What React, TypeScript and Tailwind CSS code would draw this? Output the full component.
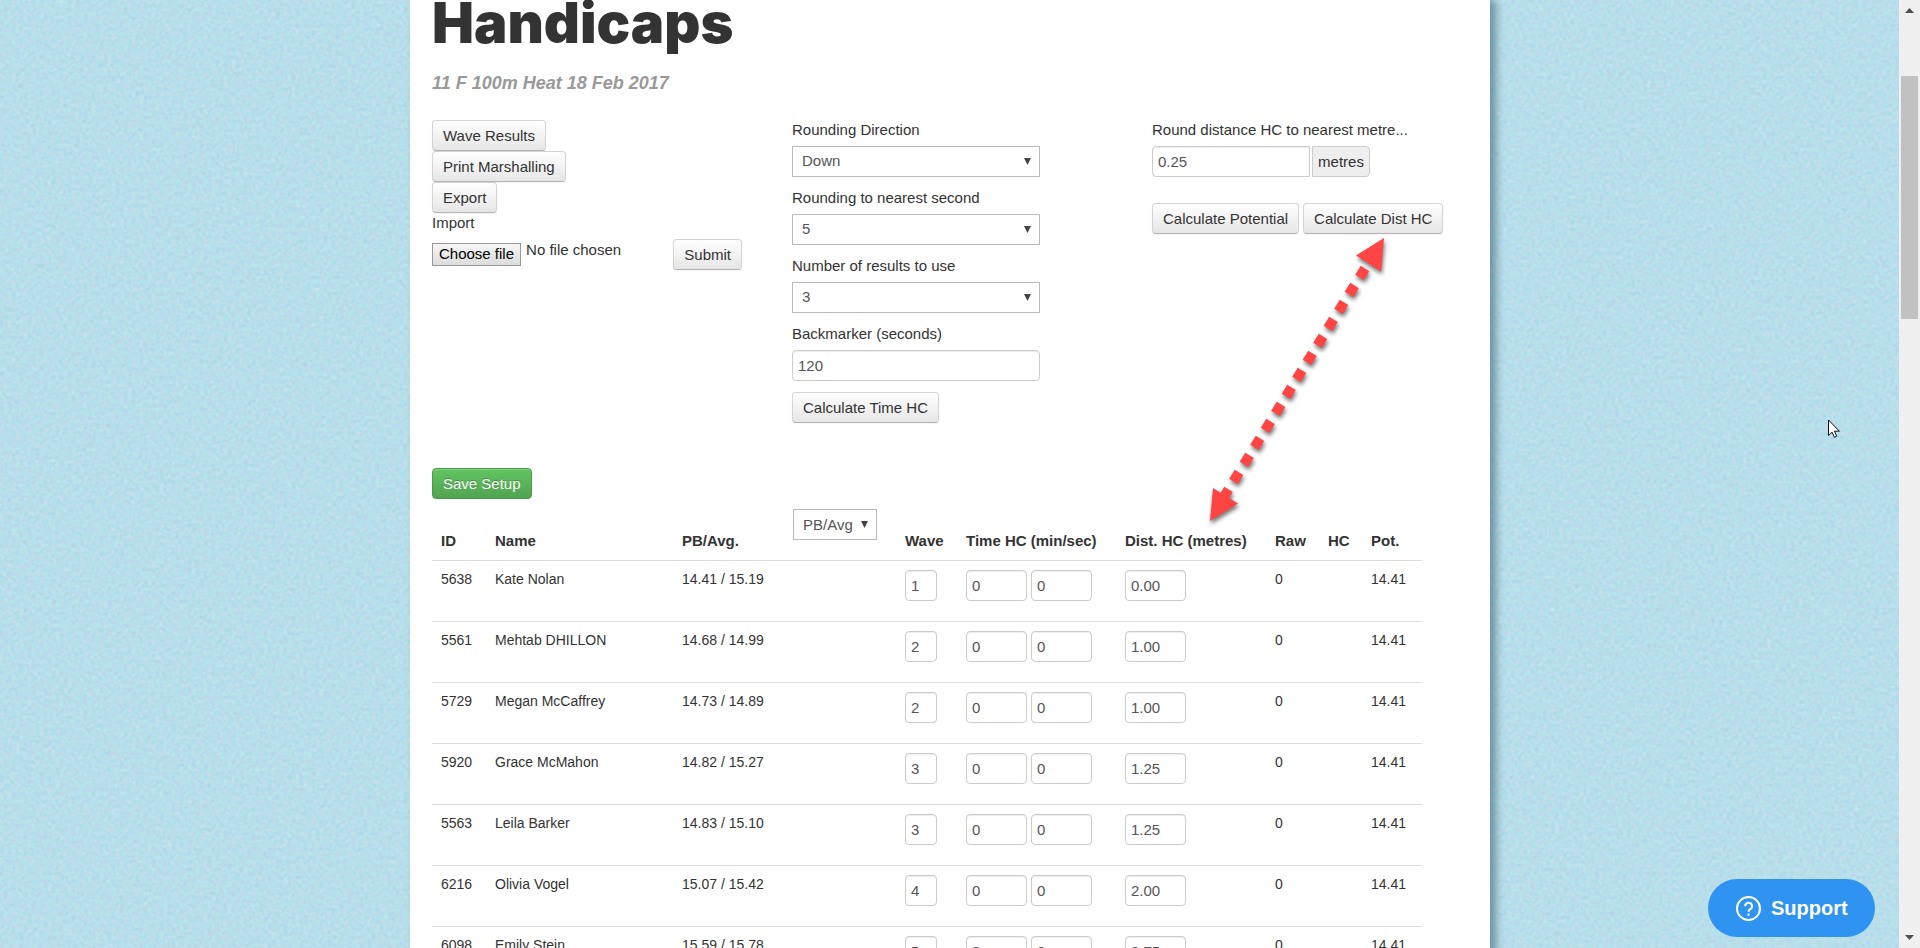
import type { ReactNode } from 'react';

type Runner = {
  id: string;
  name: string;
  times: string;
  wave: string;
  dist: string;
};

const runners: Runner[] = [
  { id: '5638', name: 'Kate Nolan', times: '14.41 / 15.19', wave: '1', dist: '0.00' },
  { id: '5561', name: 'Mehtab DHILLON', times: '14.68 / 14.99', wave: '2', dist: '1.00' },
  { id: '5729', name: 'Megan McCaffrey', times: '14.73 / 14.89', wave: '2', dist: '1.00' },
  { id: '5920', name: 'Grace McMahon', times: '14.82 / 15.27', wave: '3', dist: '1.25' },
  { id: '5563', name: 'Leila Barker', times: '14.83 / 15.10', wave: '3', dist: '1.25' },
  { id: '6216', name: 'Olivia Vogel', times: '15.07 / 15.42', wave: '4', dist: '2.00' },
  { id: '6098', name: 'Emily Stein', times: '15.59 / 15.78', wave: '5', dist: '3.75' },
];

function Button({ children }: { children: ReactNode }) {
  return (
    <button
      type="button"
      className="h-[31px] rounded border border-[#d4d4d4] border-b-[#b3b3b3] bg-linear-to-b from-white to-[#e6e6e6] px-[10px] leading-5 whitespace-nowrap text-[#333] shadow-[0_1px_2px_rgba(0,0,0,0.05)]"
    >
      {children}
    </button>
  );
}

function TextInput({ label, value, width }: { label: string; value: string; width: string }) {
  return (
    <input
      type="text"
      aria-label={label}
      defaultValue={value}
      className={`block h-[31px] rounded border border-[#ccc] bg-white px-[5px] text-[#555] shadow-[inset_0_1px_1px_rgba(0,0,0,0.075)] ${width}`}
    />
  );
}

function Select({ id, label, option, width }: { id: string; label?: string; option: string; width: string }) {
  return (
    <div className={`relative ${width}`}>
      <select
        id={id}
        aria-label={label}
        className="block h-[31px] w-full appearance-none border border-[#bbb] bg-white pl-[9px] text-[#555]"
      >
        <option>{option}</option>
      </select>
      <svg className="pointer-events-none absolute top-3 right-[9px] h-[7px] w-[7px]" viewBox="0 0 7 7">
        <path d="M0 0h7L3.500 7z" fill="#444" />
      </svg>
    </div>
  );
}

function Field({ id, label, children }: { id: string; label: string; children: ReactNode }) {
  return (
    <div className="mb-[11px]">
      <label htmlFor={id} className="mb-[6px] block leading-5">
        {label}
      </label>
      {children}
    </div>
  );
}

function Texture() {
  return (
    <svg className="absolute inset-0 h-full w-full" aria-hidden="true">
      <filter id="paper" x="0" y="0" width="100%" height="100%" colorInterpolationFilters="sRGB">
        <feTurbulence type="fractalNoise" baseFrequency="0.25" numOctaves="3" seed="4" stitchTiles="stitch" />
        <feColorMatrix values="0.16 0 0 0 0.64  0 0.1 0 0 0.82  0 0 0.06 0 0.89  0 0 0 0 1" />
      </filter>
      <rect width="100%" height="100%" filter="url(#paper)" />
    </svg>
  );
}

function Arrow() {
  return (
    <svg
      className="pointer-events-none absolute top-[228px] left-[790px] h-[310px] w-[200px] drop-shadow-[1px_3px_2px_rgba(0,0,0,0.55)]"
      viewBox="1200 228 200 310"
      aria-hidden="true"
    >
      <path d="M1365 268.500L1222 500" fill="none" stroke="#ff4444" strokeWidth="10" strokeDasharray="10.500 9.480" />
      <path d="M1384 238L1381 271.500L1356 255.500z" fill="#ff4444" />
      <path d="M1210 521L1213 488L1238 503.500z" fill="#ff4444" />
    </svg>
  );
}

function Scrollbar() {
  return (
    <div className="flex w-[21px] shrink-0 flex-col items-center bg-[#f0f0f0] py-2" aria-hidden="true">
      <svg className="h-[5px] w-[9px]" viewBox="0 0 9 5">
        <path d="M0 5L4.500 0L9 5z" fill="#505050" />
      </svg>
      <div className="mt-[63px] h-[243px] w-[17px] bg-[#c1c1c1]" />
      <svg className="mt-auto h-[5px] w-[9px]" viewBox="0 0 9 5">
        <path d="M0 0h9L4.500 5z" fill="#505050" />
      </svg>
    </div>
  );
}

export default function App() {
  return (
    <div className="flex h-screen overflow-hidden font-['Liberation_Sans',Arial,sans-serif] text-[15px] text-[#333]">
      <div className="relative flex-1 overflow-hidden bg-[#badeea] pl-px">
        <Texture />

        <main className="relative mx-auto min-h-full max-w-[1080px] bg-white px-[22px] shadow-[6px_0_8px_rgba(50,85,100,0.55)]">
          <h1 className="h-[54px] font-['Inter',sans-serif] text-[56px] leading-[46px] font-black">Handicaps</h1>
          <h3 className="pt-[19px] text-[18px] leading-5 font-bold text-[#999] italic">11 F 100m Heat 18 Feb 2017</h3>

          <div className="mt-[27px] flex h-[348px]">
            <div className="w-[360px] shrink-0">
              <div className="flex flex-col items-start">
                <Button>Wave Results</Button>
                <Button>Print Marshalling</Button>
                <Button>Export</Button>
              </div>
              <p className="leading-5">Import</p>
              <div className="mt-[6px] flex w-[310px] items-start justify-between">
                <div className="flex">
                  <input id="import-file" type="file" className="peer sr-only" />
                  <label
                    htmlFor="import-file"
                    className="mt-1 block h-[23px] border border-[#999] bg-linear-to-b from-[#f6f6f6] to-[#dcdcdc] px-[6px] leading-5 text-black"
                  >
                    Choose file
                  </label>
                  <span className="ml-[5px] leading-[22px]">No file chosen</span>
                </div>
                <Button>Submit</Button>
              </div>
            </div>

            <div className="w-[360px] shrink-0">
              <Field id="direction" label="Rounding Direction">
                <Select id="direction" option="Down" width="w-[248px]" />
              </Field>
              <Field id="nearest" label="Rounding to nearest second">
                <Select id="nearest" option="5" width="w-[248px]" />
              </Field>
              <Field id="results" label="Number of results to use">
                <Select id="results" option="3" width="w-[248px]" />
              </Field>
              <Field id="backmarker" label="Backmarker (seconds)">
                <input
                  id="backmarker"
                  type="text"
                  defaultValue="120"
                  className="block h-[31px] w-[248px] rounded border border-[#ccc] px-[5px] text-[#555] shadow-[inset_0_1px_1px_rgba(0,0,0,0.075)]"
                />
              </Field>
              <Button>Calculate Time HC</Button>
            </div>

            <div>
              <Field id="metres" label="Round distance HC to nearest metre...">
                <div className="flex gap-[2px]">
                  <input
                    id="metres"
                    type="text"
                    defaultValue="0.25"
                    className="h-[31px] w-[158px] rounded-l border border-[#ccc] px-[5px] text-[#555] shadow-[inset_0_1px_1px_rgba(0,0,0,0.075)]"
                  />
                  <span className="h-[31px] w-[58px] rounded-r border border-[#ccc] bg-[#eee] text-center leading-[29px]">
                    metres
                  </span>
                </div>
              </Field>
              <div className="mt-[26px] flex gap-1">
                <Button>Calculate Potential</Button>
                <Button>Calculate Dist HC</Button>
              </div>
            </div>
          </div>

          <button
            type="button"
            className="h-[31px] rounded border border-[#4a9a4a] bg-linear-to-b from-[#62c462] to-[#51a351] px-[10px] leading-5 text-white shadow-[inset_0_1px_0_rgba(255,255,255,0.2)] text-shadow-[0_-1px_0_rgba(0,0,0,0.25)]"
          >
            Save Setup
          </button>

          <table className="mt-[10px] w-[990px] table-fixed border-collapse text-left">
            <thead>
              <tr className="h-[51px] align-bottom leading-5 whitespace-nowrap *:px-[9px] *:pb-[9px]">
                <th className="w-[54px]">ID</th>
                <th className="w-[187px]">Name</th>
                <th className="w-[111px]">PB/Avg.</th>
                <th className="w-[112px] align-top font-normal">
                  <Select id="sort" label="Sort by" option="PB/Avg" width="w-[84px]" />
                </th>
                <th className="w-[61px]">Wave</th>
                <th className="w-[159px]">Time HC (min/sec)</th>
                <th className="w-[150px]">Dist. HC (metres)</th>
                <th className="w-[53px]">Raw</th>
                <th className="w-[43px]">HC</th>
                <th className="w-[60px]">Pot.</th>
              </tr>
            </thead>
            <tbody>
              {runners.map((r) => (
                <tr
                  key={r.id}
                  className="h-[61px] border-t border-[#ddd] align-top text-[14px] leading-5 whitespace-nowrap *:px-[9px]"
                >
                  <td className="pt-2">{r.id}</td>
                  <td className="pt-2">{r.name}</td>
                  <td className="pt-2">{r.times}</td>
                  <td></td>
                  <td className="pt-[9px] text-[15px]">
                    <TextInput label="Wave" value={r.wave} width="w-8" />
                  </td>
                  <td className="pt-[9px] text-[15px]">
                    <div className="flex gap-1">
                      <TextInput label="Minutes" value="0" width="w-[61px]" />
                      <TextInput label="Seconds" value="0" width="w-[61px]" />
                    </div>
                  </td>
                  <td className="pt-[9px] text-[15px]">
                    <TextInput label="Distance handicap" value={r.dist} width="w-[61px]" />
                  </td>
                  <td className="pt-2">0</td>
                  <td></td>
                  <td className="pt-2">14.41</td>
                </tr>
              ))}
            </tbody>
          </table>

          <Arrow />
        </main>

        <button
          type="button"
          className="absolute right-6 bottom-[11px] flex h-[58px] w-[167px] items-center gap-[10px] rounded-full bg-[#2e93f1] pl-7 text-xl font-bold text-white"
        >
          <svg className="h-[25px] w-[25px]" viewBox="0 0 25 25" fill="none" stroke="#fff" strokeWidth="2">
            <circle cx="12.500" cy="12.500" r="11.500" />
            <path d="M9.200 10.200a3.400 3.400 0 1 1 5 3c-1.200.7-1.700 1.200-1.700 2.500" />
            <path d="M12.500 17.500v2.300" />
          </svg>
          Support
        </button>

        {/* Mouse pointer */}
        <svg className="pointer-events-none absolute top-[419px] right-[59px] h-[19px] w-[12px]" viewBox="0 0 12 19">
          <path d="M.5 1v15.500l3.500-3.400 2.400 5.200 2.300-1-2.300-5.100h5z" fill="#fff" stroke="#112" />
        </svg>
      </div>

      <Scrollbar />
    </div>
  );
}
